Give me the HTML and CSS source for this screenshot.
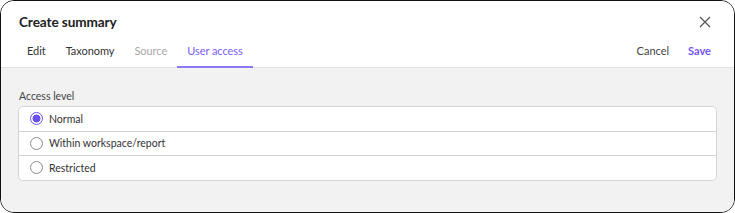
FILE: index.html
```html
<!DOCTYPE html>
<html>
<head>
<meta charset="utf-8">
<link rel="stylesheet" href="styles.css">
</head>
<body>
<div class="dialog">
  <div class="header">
    <div class="title-row">
      <h1 class="title">Create summary</h1>
      <button class="close" aria-label="Close">
        <svg width="12" height="12" viewBox="0 0 12 12"><path d="M1 1L11 11M11 1L1 11" stroke="#555" stroke-width="1.2" fill="none"/></svg>
      </button>
    </div>
    <div class="tab-row">
      <div class="tabs">
        <span class="tab">Edit</span>
        <span class="tab">Taxonomy</span>
        <span class="tab disabled">Source</span>
        <span class="tab active">User access</span>
      </div>
      <div class="actions">
        <span class="cancel">Cancel</span>
        <span class="save">Save</span>
      </div>
    </div>
  </div>
  <div class="body">
    <div class="label">Access level</div>
    <div class="options">
      <div class="option"><span class="radio checked"></span><span>Normal</span></div>
      <div class="option"><span class="radio"></span><span>Within workspace/report</span></div>
      <div class="option"><span class="radio"></span><span>Restricted</span></div>
    </div>
  </div>
</div>
</body>
</html>
```
FILE: styles.css
```css
html, body {
  margin: 0;
  padding: 0;
  background: #fff;
}
body {
  font-family: "Lato", "Noto Sans", sans-serif;
  color: #222;
}
.dialog {
  box-sizing: border-box;
  width: 735px;
  height: 213px;
  border: 1.5px solid #111;
  border-radius: 14px;
  overflow: hidden;
  display: flex;
  flex-direction: column;
}
.header {
  background: #fff;
  border-bottom: 1px solid #e2e2e2;
  padding: 0 0 0 16px;
}
.title-row {
  display: flex;
  justify-content: space-between;
  align-items: center;
  height: 40px;
  padding-top: 2px;
  box-sizing: border-box;
}
.title {
  margin: 0 0 0 2px;
  font-size: 13.6px;
  font-weight: 700;
  letter-spacing: -0.1px;
  color: #222;
}
.close {
  background: none;
  border: 0;
  padding: 0;
  margin-right: 23px;
  width: 12px;
  height: 12px;
  display: flex;
}
.tab-row {
  display: flex;
  justify-content: space-between;
  align-items: stretch;
  height: 26px;
}
.tabs {
  display: flex;
}
.tab {
  padding: 0 10px;
  font-size: 11px;
  letter-spacing: -0.05px;
  color: #333;
  display: flex;
  align-items: center;
  padding-bottom: 6px;
  border-bottom: 2px solid transparent;
  margin-bottom: -1px;
}
.tab.disabled {
  color: #a8a8a8;
}
.tab.active {
  color: #7a5cf5;
  border-bottom-color: #8b78f3;
}
.actions {
  display: flex;
  gap: 19px;
  align-items: center;
  padding-bottom: 7px;
  padding-right: 23px;
  font-size: 11px;
}
.cancel {
  color: #444;
}
.save {
  color: #7356f0;
  font-weight: 700;
}
.body {
  flex: 1;
  background: #f2f2f2;
  padding: 22px 17px 0 17px;
}
.label {
  font-size: 10.5px;
  color: #444;
  margin-bottom: 4px;
  margin-left: 1px;
}
.options {
  background: #fff;
  border: 1px solid #d4d4d4;
  border-radius: 5px;
}
.option {
  display: flex;
  align-items: center;
  height: 23.6px;
  padding-left: 11px;
  gap: 6px;
  font-size: 10.5px;
  color: #333;
}
.option + .option {
  border-top: 1px solid #d4d4d4;
}
.radio {
  box-sizing: border-box;
  width: 13px;
  height: 13px;
  border-radius: 50%;
  border: 1px solid #8a8a8a;
  background: #fff;
}
.radio.checked {
  border: 1.5px solid #6b4ff2;
  background: radial-gradient(circle, #6b4ff2 0 3.8px, #fff 4.2px);
}
```
